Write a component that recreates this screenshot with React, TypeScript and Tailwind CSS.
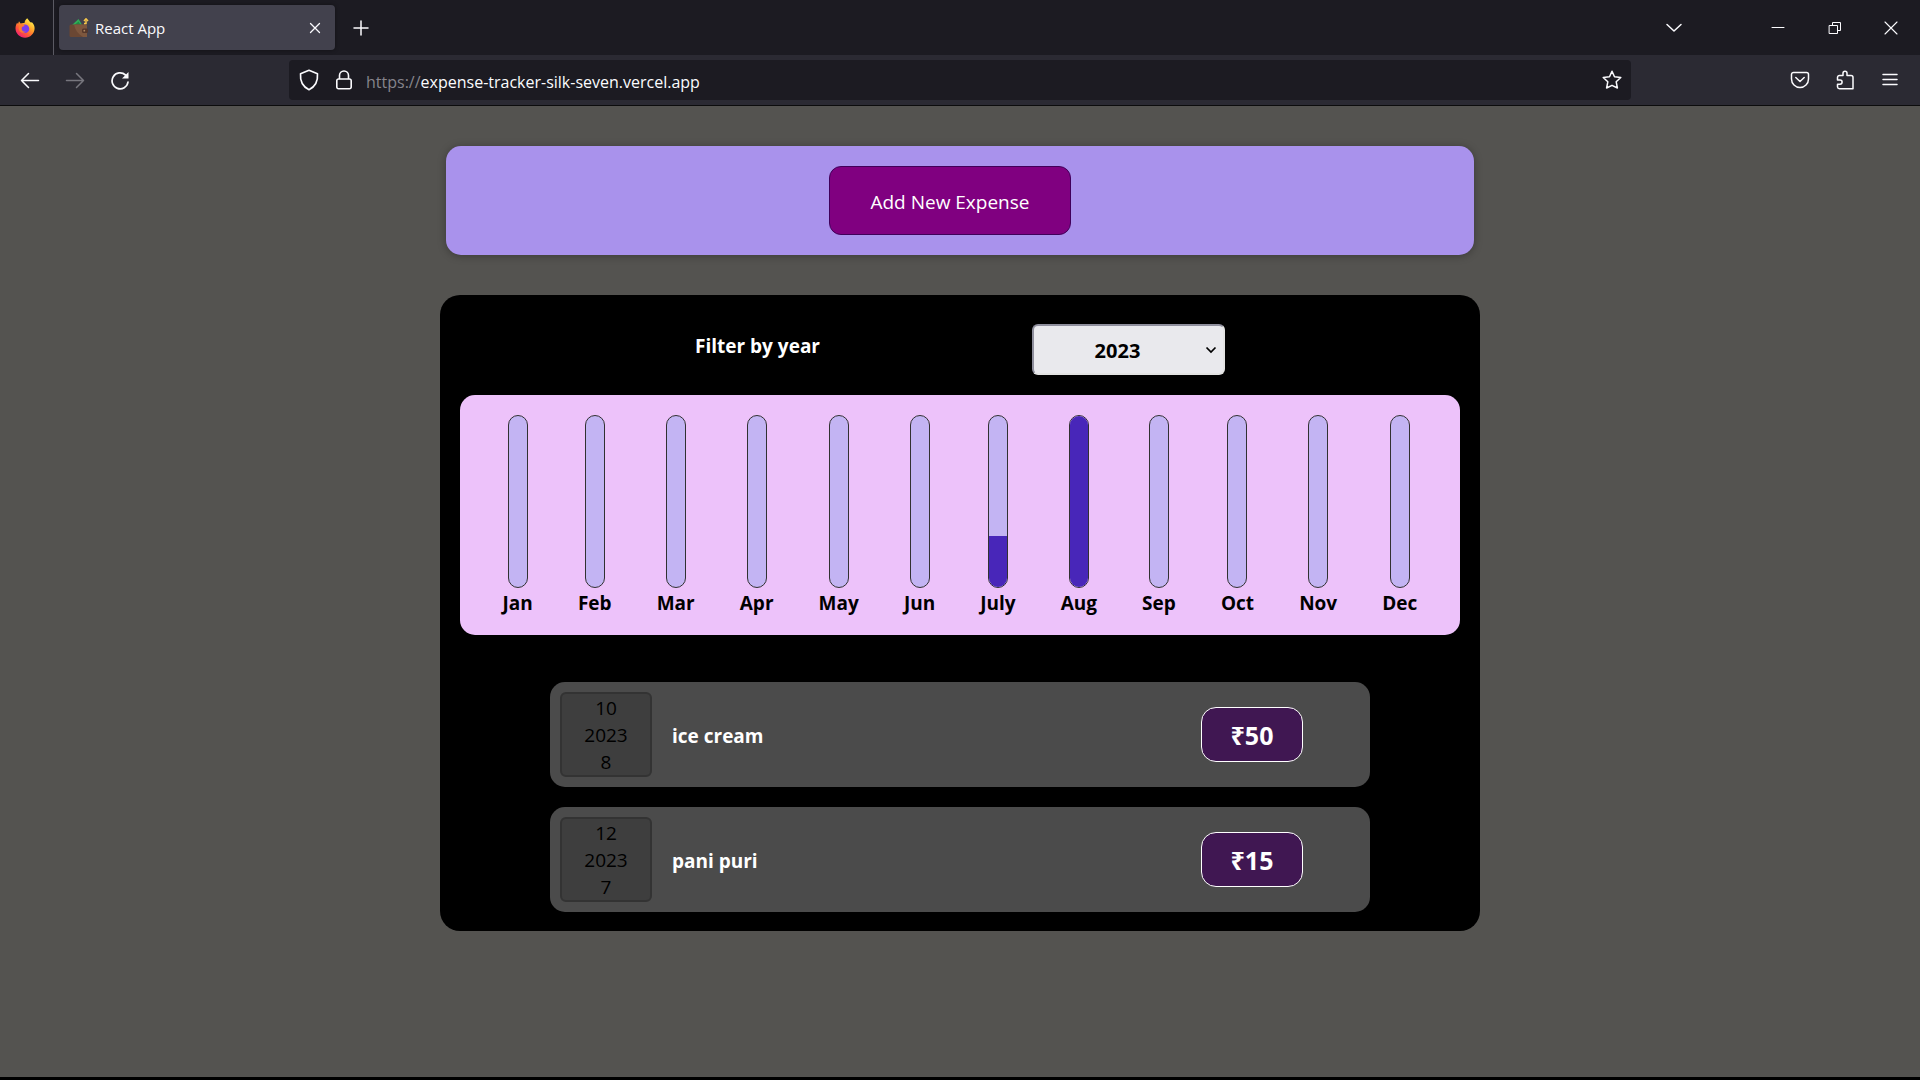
import { useState } from "react";

const months = [
  { label: "Jan", fill: 0 },
  { label: "Feb", fill: 0 },
  { label: "Mar", fill: 0 },
  { label: "Apr", fill: 0 },
  { label: "May", fill: 0 },
  { label: "Jun", fill: 0 },
  { label: "July", fill: 30 },
  { label: "Aug", fill: 100 },
  { label: "Sep", fill: 0 },
  { label: "Oct", fill: 0 },
  { label: "Nov", fill: 0 },
  { label: "Dec", fill: 0 },
];

const expenses = [
  { day: 10, year: 2023, month: 8, title: "ice cream", amount: 50 },
  { day: 12, year: 2023, month: 7, title: "pani puri", amount: 15 },
];

function Icon({ d, width = 1.5, size = 20 }: { d: string; width?: number; size?: number }) {
  return (
    <svg width={size} height={size} viewBox="0 0 20 20" fill="none" stroke="currentColor" strokeWidth={width} strokeLinecap="round" strokeLinejoin="round" aria-hidden="true">
      <path d={d} />
    </svg>
  );
}

function FirefoxLogo() {
  return (
    <svg width="20" height="20" viewBox="0 0 20 20" aria-hidden="true">
      <defs>
        <linearGradient id="flame" x1="0.85" y1="0.1" x2="0.2" y2="1">
          <stop offset="0" stopColor="#fff44f" />
          <stop offset="0.35" stopColor="#ffa52a" />
          <stop offset="0.65" stopColor="#ff5a36" />
          <stop offset="1" stopColor="#f0147e" />
        </linearGradient>
      </defs>
      <path d="M12.2 0.3C13.6 2 14.6 3.300 15.300 4.300L17.200 4.600C19 6.500 19.700 8.500 19.600 10.800C19.300 15.800 15.200 19.700 10.100 19.700C4.800 19.700 0.500 15.600 0.500 10.300C0.500 8 1.200 6 2.200 4.700L3 6L4 3.300L5.600 5.500C7 4.800 8.600 4.800 9.500 5C9.700 3 10.700 1.300 12.200 0.300Z" fill="url(#flame)" />
      <circle cx="10" cy="10.700" r="4.300" fill="#7a3cf0" />
      <path d="M4 6.500C6 5.500 8.500 6 9.700 8C8.500 8.100 7.200 8.600 6.700 9.700C6.300 12.500 8.500 14.300 11 13.600C7.500 16.500 3.500 13.500 3.700 10Z" fill="#ff7a2f" />
      <path d="M10.200 5.500C13 5.900 15 8.200 14.600 11C15.600 9 15 6.500 13 5Z" fill="#ffb52e" />
    </svg>
  );
}

function WalletLogo() {
  return (
    <svg width="20" height="20" viewBox="0 0 20 20" aria-hidden="true">
      <path d="M2.500 7.500L9.500 1L13.500 7.500Z" fill="#2fae57" />
      <path d="M5 7.500L9.500 3.500L12 7.500Z" fill="#1f8a43" />
      <rect x="0.500" y="6.500" width="17.500" height="12.500" rx="1.500" fill="#6b4733" />
      <path d="M5 6.500H16.500A1.500 1.500 0 0 1 18 8V19H14C9 16 6 12 5 6.500Z" fill="#7d573e" />
      <rect x="13" y="10.500" width="6" height="4.500" rx="1.500" fill="#55372a" />
      <circle cx="15.300" cy="12.700" r="0.900" fill="#b08a63" />
      <path d="M15 5.500H17V2.500M15 3L17 0.800L19 3" stroke="#f6c64a" strokeWidth="1.500" fill="none" />
    </svg>
  );
}

function BrowserChrome() {
  return (
    <header className="text-[#fbfbfe]">
      <div className="flex h-[55px] items-center bg-[#1c1b22]">
        <div className="flex h-full w-[54px] items-center border-r border-[#5b5a63] pl-[15px]">
          <FirefoxLogo />
        </div>
        <div className="ml-[5px] flex h-[45px] w-[276px] items-center rounded bg-[#42414d] pr-[10px] pl-[10px] shadow-[0_0_4px_rgba(0,0,0,0.4)]">
          <WalletLogo />
          <span className="ml-[6px] flex-1 pt-px text-[15px]">React App</span>
          <button type="button" aria-label="Close tab">
            <Icon d="M5.500 5.500L14.500 14.500M14.500 5.500L5.500 14.500" width={1.300} />
          </button>
        </div>
        <button type="button" aria-label="New tab" className="ml-4">
          <Icon d="M10 3V17M3 10H17" />
        </button>
        <div className="ml-auto flex items-center">
          <button type="button" aria-label="List all tabs" className="mr-[84px]">
            <Icon d="M3 6.500L10 13L17 6.500" />
          </button>
          <button type="button" aria-label="Minimize" className="mr-[37px]">
            <Icon d="M4 9.500H16" width={1} />
          </button>
          <button type="button" aria-label="Restore" className="mr-9">
            <Icon d="M4.500 7.500H12.500V15.500H4.500ZM7.500 7.500V4.500H15.500V12.500H12.500" width={1} />
          </button>
          <button type="button" aria-label="Close" className="mr-[19px]">
            <Icon d="M4 4L16 16M16 4L4 16" width={1.100} />
          </button>
        </div>
      </div>
      <div className="flex h-[51px] items-center border-b border-[#0c0c0d] bg-[#2b2a33]">
        <nav className="flex w-[289px] items-center gap-[25px] pl-5" aria-label="History">
          <button type="button" aria-label="Back">
            <Icon d="M18.500 10.500H1.500M8.500 3.500L1.500 10.500L8.500 17.500" />
          </button>
          <button type="button" aria-label="Forward" className="text-[#77767e]">
            <Icon d="M1.500 10.500H18.500M11.500 3.500L18.500 10.500L11.500 17.500" />
          </button>
          <button type="button" aria-label="Reload">
            <svg width="20" height="20" viewBox="0 0 20 20" fill="none" stroke="currentColor" strokeWidth="1.700" strokeLinecap="round" aria-hidden="true">
              <path d="M18 12A8 8 0 1 1 15.500 5" />
              <path d="M18.500 2V8.500H12Z" fill="currentColor" stroke="none" />
            </svg>
          </button>
        </nav>
        <div className="flex h-10 flex-1 items-center rounded bg-[#1c1b22] px-[9px]">
          <button type="button" aria-label="Tracking protection" className="mr-[14px]">
            <Icon d="M10 1.200L17.700 4.300C18.200 10.500 15.700 16 10 18.800C4.300 16 1.800 10.500 2.300 4.300Z" width={1.500} size={22} />
          </button>
          <button type="button" aria-label="Site information" className="mr-[12px]">
            <Icon d="M4.500 9H15.500A1.700 1.700 0 0 1 17.200 10.700V17A1.700 1.700 0 0 1 15.500 18.700H4.500A1.700 1.700 0 0 1 2.800 17V10.700A1.700 1.700 0 0 1 4.500 9ZM5.500 9V5.500A4.500 4.500 0 0 1 14.500 5.500V9" width={1.600} />
          </button>
          <a href="#" className="flex-1 pt-[3px] text-[16px]">
            <span className="text-[#85848b]">https://</span>expense-tracker-silk-seven.vercel.app
          </a>
          <button type="button" aria-label="Bookmark this page">
            <Icon d="M10 1.200L12.500 6.800L18.800 7.500L14.200 11.800L15.400 18L10 15.300L4.600 18L5.800 11.800L1.200 7.500L7.500 6.800Z" />
          </button>
        </div>
        <div className="flex w-[289px] items-center justify-end gap-[25px] pr-5">
          <button type="button" aria-label="Save to Pocket">
            <Icon d="M3.500 2.500H16.500A2 2 0 0 1 18.500 4.500V9A8.500 8.500 0 0 1 1.500 9V4.500A2 2 0 0 1 3.500 2.500ZM5.800 7.500L10 11.500L14.200 7.500" />
          </button>
          <button type="button" aria-label="Extensions">
            <Icon d="M8 5.500V3.200A2 2 0 0 1 12 3.200V5.500H16A2 2 0 0 1 18 7.500V18.800H4.500A2 2 0 0 1 2.500 17V14.200H5A2 2 0 0 0 5 10H2.500V7.500A2 2 0 0 1 4.500 5.500Z" />
          </button>
          <button type="button" aria-label="Menu">
            <Icon d="M3 4.500H17M3 9.500H17M3 14.500H17" />
          </button>
        </div>
      </div>
    </header>
  );
}

function YearFilter() {
  const [year, setYear] = useState("2023");
  return (
    <div className="flex items-start justify-center gap-[212px] pt-[9px] font-bold">
      <label htmlFor="year" className="pt-2 text-[19px] leading-7 text-white">
        Filter by year
      </label>
      <div className="relative">
        <select
          id="year"
          value={year}
          onChange={(e) => setYear(e.target.value)}
          className="h-[51px] w-[193px] appearance-none rounded-md border-2 border-t-[#8f8f9d] border-r-[#e3e3e3] border-b-[#e3e3e3] border-l-[#8f8f9d] bg-[#e9e9ed] pt-[2px] pr-[22px] text-center text-[20px] text-black [text-align-last:center]"
        >
          <option>2023</option>
          <option>2022</option>
          <option>2021</option>
        </select>
        <svg className="pointer-events-none absolute top-5 right-2" width="12" height="12" viewBox="0 0 12 12" fill="none" stroke="black" strokeWidth="1.700" aria-hidden="true">
          <path d="M1.500 3.500L6 8L10.500 3.500" />
        </svg>
      </div>
    </div>
  );
}

function Chart() {
  return (
    <div className="mt-5 flex justify-around rounded-[15px] bg-[#edc2fa] px-5 pt-5 pb-4">
      {months.map((m) => (
        <div key={m.label} className="flex flex-col items-center">
          <div className="flex h-[173px] w-5 flex-col justify-end overflow-hidden rounded-[10px] border border-[#313131] bg-[#c3b4f3]">
            <div className="bg-[#4826b9]" style={{ height: `${m.fill}%` }} />
          </div>
          <span className="text-[19px] leading-[31px] font-bold text-black">{m.label}</span>
        </div>
      ))}
    </div>
  );
}

export default function App() {
  return (
    <div className="flex min-h-screen flex-col border-b-3 border-black bg-[#545350] font-['Open_Sans','Noto_Sans',sans-serif]">
      <BrowserChrome />
      <main className="flex flex-col items-center py-10">
        <section className="flex w-full max-w-[1028px] justify-center rounded-[15px] bg-[#a992ec] p-5 pr-10 shadow-[0_1px_8px_rgba(0,0,0,0.3)]">
          <button type="button" className="h-[69px] w-[242px] rounded-xl border border-[#40005a] bg-[#800080] pt-[3px] text-[19px] text-white">
            Add New Expense
          </button>
        </section>
        <section className="mt-10 w-full max-w-[1040px] rounded-[20px] bg-black px-5 pt-5 pb-[19px]">
          <YearFilter />
          <Chart />
          <ul className="mx-auto mt-[47px] flex max-w-[820px] flex-col gap-5">
            {expenses.map((e) => (
              <li key={e.title} className="flex h-[105px] items-center rounded-[15px] bg-[#4b4b4b] pr-[67px] pl-[10px]">
                <div className="flex h-[85px] w-[92px] flex-col items-center rounded-md border-2 border-[#333333] bg-[#3e3e3e] pt-px text-[19px] leading-[27px] text-black">
                  <span>{e.day}</span>
                  <span>{e.year}</span>
                  <span>{e.month}</span>
                </div>
                <h2 className="ml-5 flex-1 pt-[3px] text-[19px] font-bold text-white">{e.title}</h2>
                <div className="flex h-[55px] w-[102px] items-center justify-center rounded-[15px] border border-white bg-[#401752] pt-[2px] text-[25px] font-bold text-white">
                  ₹{e.amount}
                </div>
              </li>
            ))}
          </ul>
        </section>
      </main>
    </div>
  );
}
